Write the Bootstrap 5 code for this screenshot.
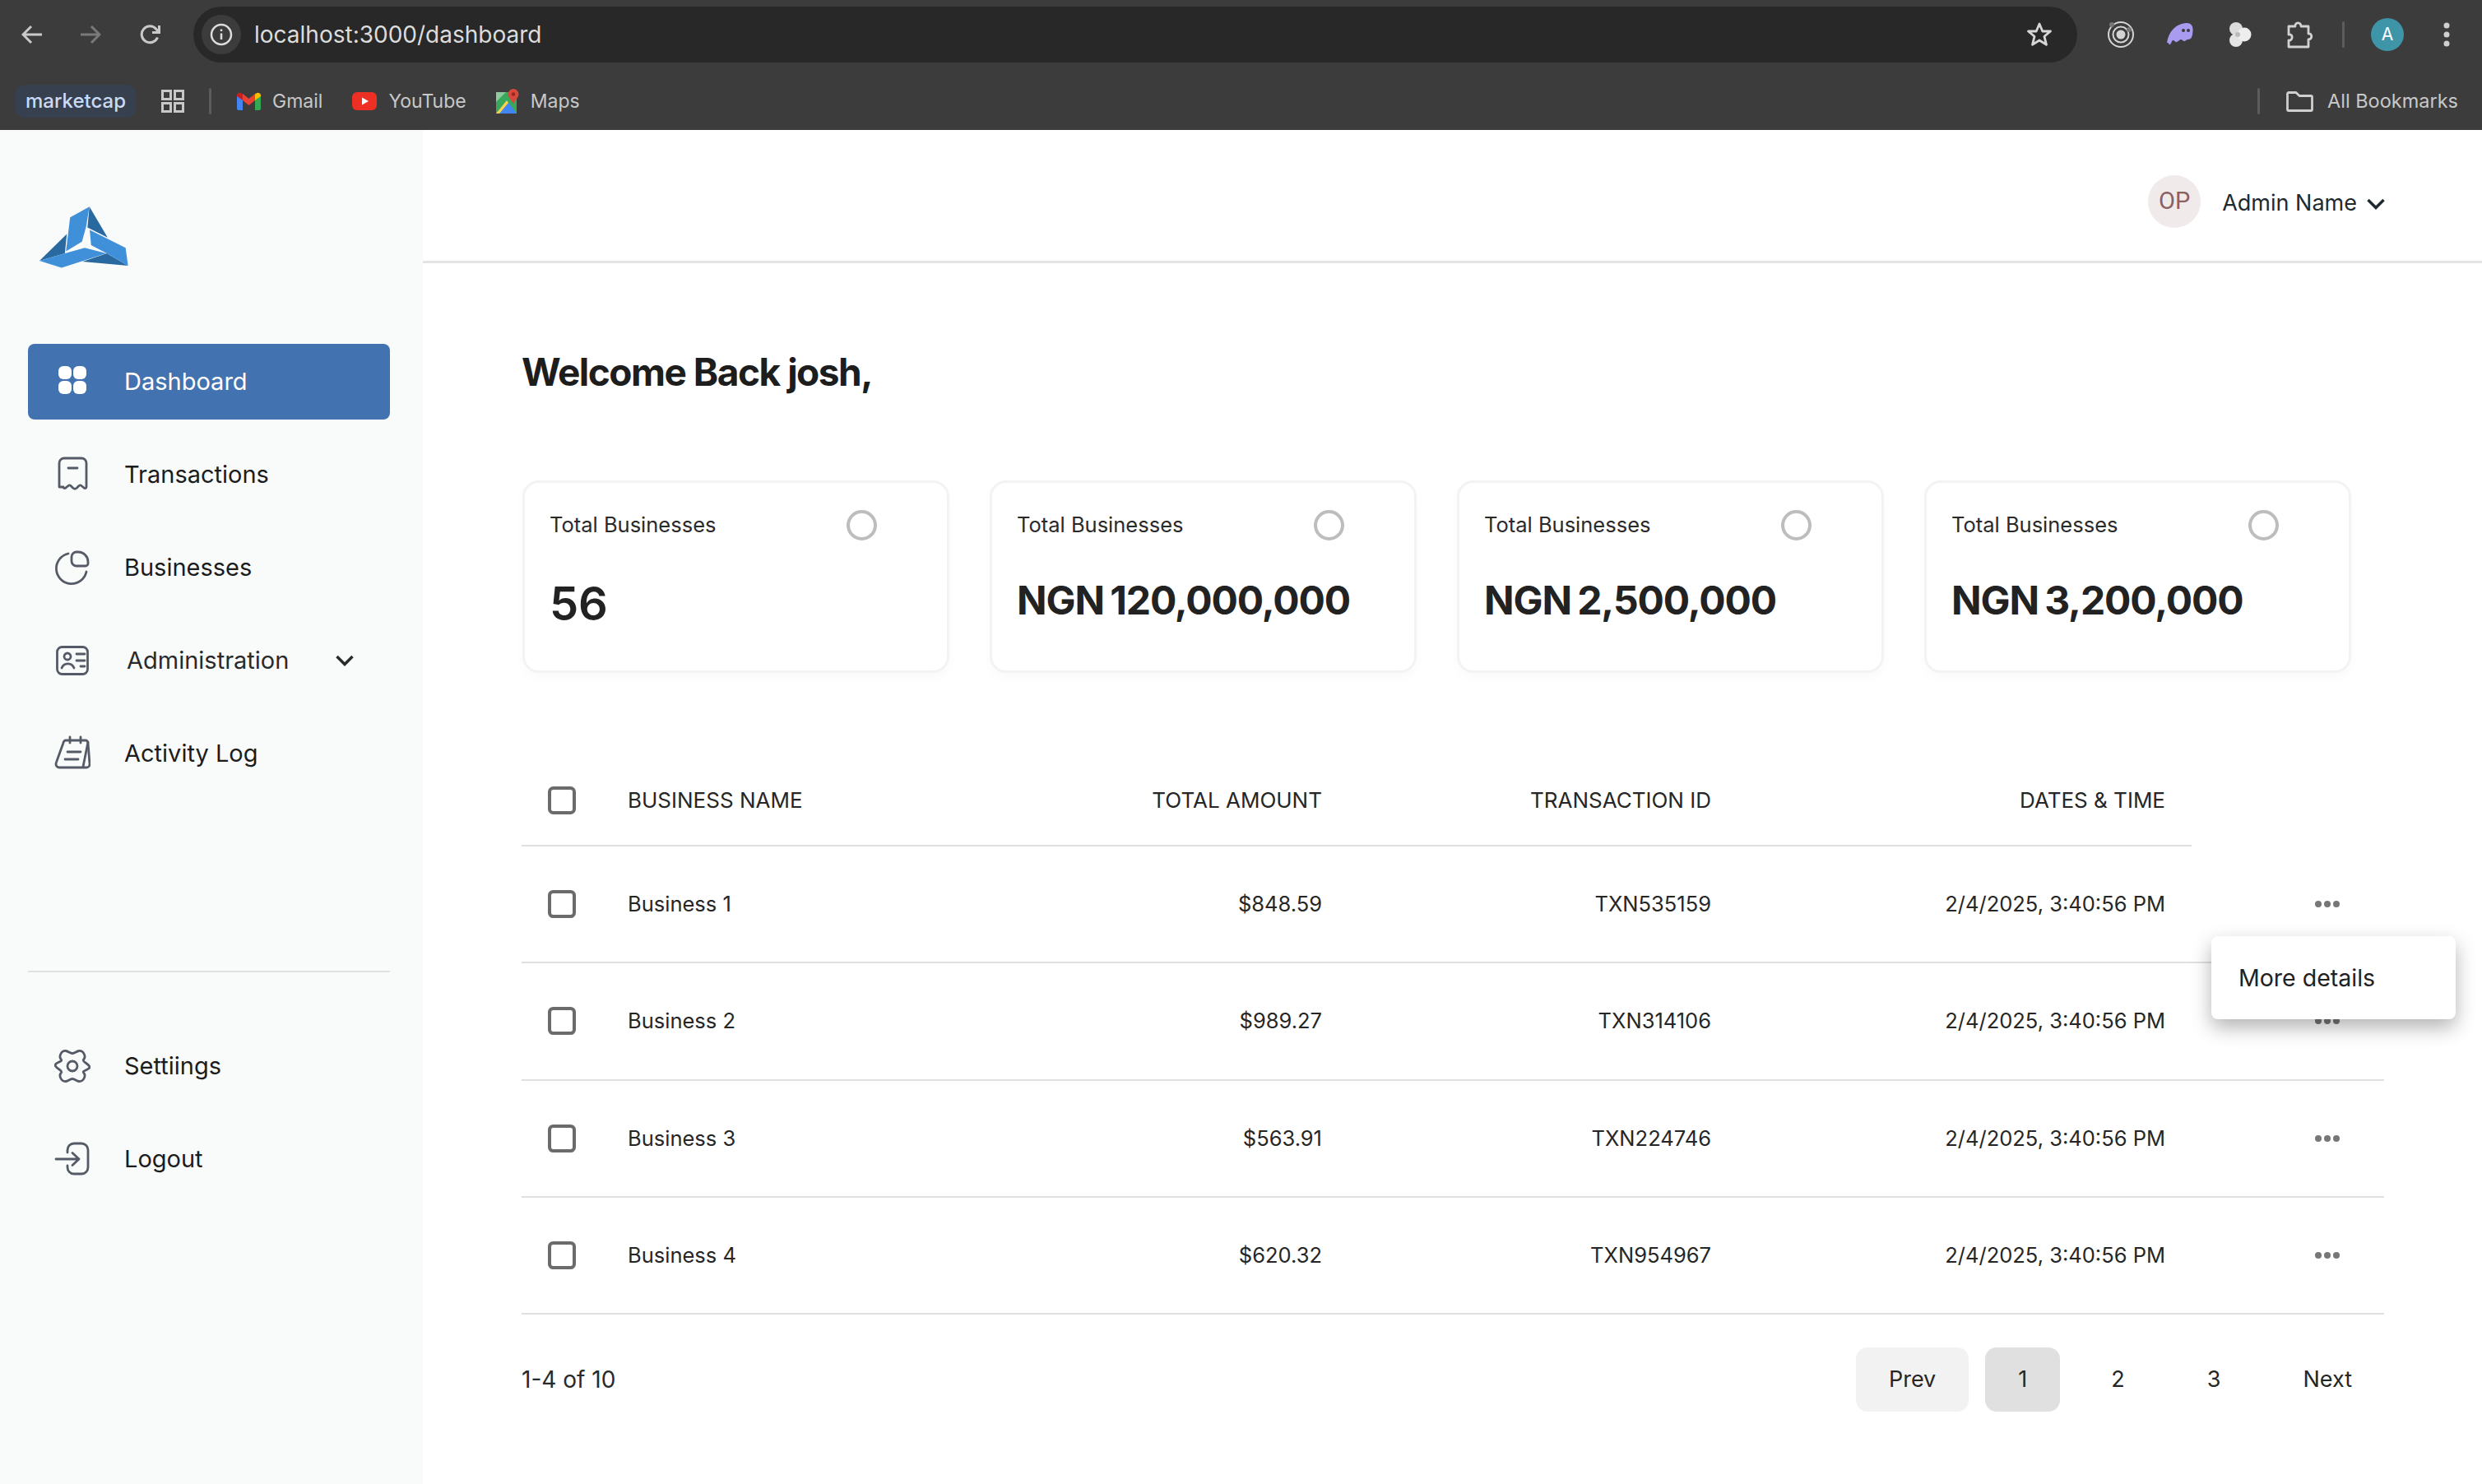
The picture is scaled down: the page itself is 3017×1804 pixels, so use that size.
<!DOCTYPE html>
<html lang="en">
<head>
  <meta charset="UTF-8">
  <meta name="viewport" content="width=device-width, initial-scale=1.0">
  <title>Dashboard</title>
  <link href="https://cdn.jsdelivr.net/npm/bootstrap@5.3.0/dist/css/bootstrap.min.css" rel="stylesheet">
  <style>
    html, body { height: 100%; }
    body { font-family: Inter, "Liberation Sans", sans-serif; color: #222; background: #fff; overflow: hidden; }

    /* browser chrome */
    .chrome-bar { background: #3c3c3c; height: 158px; font-family: Inter, "Liberation Sans", sans-serif; }
    .tab-row { height: 84px; padding-top: 8px; }
    .tool-btn { flex: none; display: block; margin-top: 22px; }
    .tool-back { margin-left: 26px; }
    .tool-forward { margin-left: 45px; }
    .tool-reload { margin-left: 47px; }
    .url-box { flex: 1; height: 68px; background: #282828; border-radius: 34px; color: #dcdcdc; font-size: 28px; padding: 0 26px 0 10px; margin: 0 36px 0 39px; }
    .url-info { width: 48px; height: 48px; border-radius: 50%; background: #3c3c3c; margin-right: 16px; }
    .ext-tools { height: 68px; padding-right: 39px; }
    .ext-ghost { margin-left: 38px; }
    .ext-blobs { margin-left: 40px; }
    .ext-puzzle { margin-left: 42px; }
    .ext-sep { margin: 0 32px 0 34px; }
    .profile-dot { width: 40px; height: 40px; background: #3f95a8; color: #fff; font-size: 21px; }
    .kebab-icon { margin-left: 48px; }
    .chrome-sep { width: 3px; background: #5c5c5c; border-radius: 2px; height: 32px; flex: none; }
    .bookmark-row { height: 74px; padding: 4px 0 0 18px; color: #c8c8c8; font-size: 23px; }
    .chip-bookmark { background: #36404f; color: #c9dbf8; border-radius: 12px; height: 40px; width: 148px; font-weight: 500; font-size: 24px; }
    .apps-icon { margin-left: 30px; }
    .apps-sep { margin: 0 31px 0 30px; }
    .mark-item { gap: 14px; }
    .mark-next { margin-left: 36px; }
    .folder-sep { margin-right: 32px; }
    .all-marks { margin: 0 29px 0 17px; font-size: 23.500px; }

    /* sidebar */
    .app-shell { height: calc(100% - 158px); }
    .side-panel { width: 514px; flex: none; background: #f9fbfb; padding: 0 40px 0 34px; }
    .logo-wrap { height: 260px; padding-top: 93px; padding-left: 14px; }
    .side-link { height: 92px; margin-bottom: 21px; padding-left: 32px; gap: 41px; font-size: 29px; color: #1c1c1c; border-radius: 8px; text-decoration: none; }
    .side-link.is-active { background: #4272b0; color: #fff; }
    .side-link.admin-link { gap: 44px; padding-right: 44px; color: #2a2a2a; }
    .side-link svg { flex: none; }
    .side-rule { border-top: 2px solid #dfe1e1; opacity: 1; margin: 218px 0 0; height: 0; }
    .side-bottom { padding-top: 68px; }

    /* top header */
    .work-area { min-width: 0; }
    .top-head { height: 162px; border-bottom: 3px solid #e4e4e4; padding-right: 118px; padding-top: 20px; }
    .user-badge { width: 64px; height: 64px; background: #f0eaeb; color: #8a6060; font-size: 29px; font-family: Roboto, sans-serif; margin-right: 26px; margin-top: -6px; }
    .user-name { font-size: 27px; color: #1f2a30; margin-right: 12px; }

    .work-body { padding: 0 119px 0 120px; }
    .welcome-title { font-size: 46px; font-weight: 700; letter-spacing: -1.5px; color: #1d1d1d; margin: 104px 0 104px 0; line-height: 56px; }
    .stat-row { gap: 49px; margin-left: 1px; margin-bottom: 100px; }
    .stat-box { width: 519px; height: 234px; border: 3px solid #f3f3f6; border-radius: 20px; box-shadow: 0 6px 14px rgba(30, 30, 60, .025); padding: 32px 30px; }
    .stat-label { font-size: 25.5px; color: #2a2a2a; width: 361px; }
    .stat-ring { width: 37px; height: 37px; border: 4px solid #bdbdbd; border-radius: 50%; margin-top: 1px; }
    .stat-figure { font-size: 48px; font-weight: 700; color: #222; letter-spacing: -1.1px; word-spacing: -3px; margin-top: 43px; line-height: 60px; }
    .stat-figure.is-count { font-size: 56px; font-weight: 600; letter-spacing: -.3px; margin-top: 47px; }

    /* table */
    .biz-table { table-layout: fixed; width: 2264px; margin: 0; --bs-table-border-color: #e0e0e0; font-size: 25.5px; color: #262626; }
    .biz-table th { height: 110px; font-weight: 400; font-size: 26px; vertical-align: middle; padding: 0 32px; border-bottom: 2px solid #e0e0e0; color: #262626; }
    .biz-table td { height: 142.25px; vertical-align: middle; padding: 0 32px; border-bottom: 2px solid #e0e0e0; color: #262626; }
    .biz-table > :not(caption) > * > * { box-shadow: none; }
    .biz-table > tbody { border-top: 0; }
    .col-pick { width: 97px; }
    .col-name { width: 569px; }
    .col-amount { width: 339px; }
    .col-txn { width: 473px; }
    .col-date { width: 552px; }
    .col-action { width: 234px; }
    .row-check { width: 34px; height: 34px; margin: 0 !important; display: block; border: 4px solid #6b6b6b; border-radius: 4px; background-color: #fff; }
    .biz-table td.action-cell { padding: 0; }
    .action-wrap { height: 8px; padding-left: 150px; line-height: 0; }
    .action-menu { top: 43px; left: 24px; width: 297px; height: 101px; padding: 0; border: 0; border-radius: 8px; background: #fff; box-shadow: 0 10px 24px rgba(0, 0, 0, .3); z-index: 5; min-width: 0; }
    .action-menu .dropdown-item { font-size: 28.500px; color: #222; padding: 0 33px; height: 101px; line-height: 101px; }

    /* pager */
    .pager-row { margin-top: 40px; height: 78px; width: 2265px; }
    .count-note { font-size: 28px; color: #2a2a2a; }
    .pager-list { gap: 20px; }
    .pager-list .btn { font-size: 27px; height: 78px; padding: 0 40px; border: 0; border-radius: 14px; color: #262626; line-height: 78px; }
    .pager-list .btn.is-prev { background: #f2f2f2; }
    .pager-list .btn.is-current { background: #e0e0e0; margin-right: 2px; }
  </style>
</head>
<body>
  <!-- Barre du navigateur -->
  <div class="chrome-bar">
    <div class="tab-row d-flex align-items-start">
      <svg class="tool-btn tool-back" width="26" height="24" viewBox="0 0 26 24" fill="none" stroke="#c9c9c9" stroke-width="3"><path d="M25 12H3M12 2 2 12l10 10"/></svg>
      <svg class="tool-btn tool-forward" width="26" height="24" viewBox="0 0 26 24" fill="none" stroke="#797979" stroke-width="3"><path d="M1 12h22M14 2l10 10-10 10"/></svg>
      <svg class="tool-btn tool-reload" width="26" height="24" viewBox="0 0 26 24" fill="none" stroke="#c9c9c9" stroke-width="3"><path d="M21.5 15.5A10 10 0 1 1 20 5.500L23 9"/><path d="M23.500 1v8.500H15"/></svg>
      <div class="url-box d-flex align-items-center">
        <span class="url-info d-flex align-items-center justify-content-center">
          <svg width="28" height="28" viewBox="0 0 28 28" fill="none" stroke="#dcdcdc" stroke-width="2.500"><circle cx="14" cy="14" r="12"/><path d="M14 12.500V20M14 7.500v2.500"/></svg>
        </span>
        <span>localhost:3000/dashboard</span>
        <svg class="ms-auto me-1" width="32" height="32" viewBox="0 0 32 32" fill="none" stroke="#d6d6d6" stroke-width="2.800" stroke-linejoin="round"><path d="M16 3l3.800 9h9.700l-7.500 6.300 2.500 10L16 23l-8.500 5.300 2.500-10L2.500 12h9.700z"/></svg>
      </div>
      <div class="ext-tools d-flex align-items-center">
        <svg width="34" height="34" viewBox="0 0 34 34" fill="none" stroke="#d4d4d4" stroke-width="2"><circle cx="17" cy="17" r="15"/><circle cx="17" cy="17" r="9.500"/><circle cx="17" cy="17" r="4.500" fill="#d4d4d4"/><circle cx="6" cy="5" r="3" fill="#777" stroke="none"/><circle cx="27" cy="11" r="3" fill="#777" stroke="none"/></svg>
        <svg class="ext-ghost" width="34" height="30" viewBox="0 0 34 30"><path d="M1 25C3 11 12 2 24 1c7-.5 9 4 8.500 10-.5 7-2 10-6 10-2 0-2.500 2-4.500 2s-2-2-4-2-3 3-5.500 3-2-2-4-2-2 5-4 5c-1.500 0-2-1-1.500-2z" fill="#a99cf0"/><circle cx="21" cy="10" r="2" fill="#3c3c3c"/><circle cx="27" cy="10" r="2" fill="#3c3c3c"/></svg>
        <svg class="ext-blobs" width="30" height="32" viewBox="0 0 30 32"><circle cx="11" cy="9" r="8" fill="#dcdcdc"/><circle cx="11" cy="23" r="8" fill="#e4e4e4"/><circle cx="21" cy="16" r="8.500" fill="#eeeeee"/><circle cx="13" cy="16" r="3" fill="#bbb"/></svg>
        <svg class="ext-puzzle" width="34" height="34" viewBox="0 0 34 34" fill="none" stroke="#d2d2d2" stroke-width="2.800" stroke-linejoin="round"><path d="M3 7h8c-1-5 7-6 7 0h9v9c5-1 5 7 0 7v9H3v-8c5 1 6-8 0-7z"/></svg>
        <span class="chrome-sep ext-sep"></span>
        <span class="profile-dot d-flex align-items-center justify-content-center rounded-circle">A</span>
        <svg class="kebab-icon" width="8" height="32" viewBox="0 0 8 32" fill="#cfcfcf"><circle cx="4" cy="5" r="3.500"/><circle cx="4" cy="16" r="3.500"/><circle cx="4" cy="27" r="3.500"/></svg>
      </div>
    </div>
    <div class="bookmark-row d-flex align-items-center">
      <span class="chip-bookmark d-flex align-items-center justify-content-center">marketcap</span>
      <svg class="apps-icon" width="28" height="28" viewBox="0 0 28 28" fill="none" stroke="#c8c8c8" stroke-width="3"><rect x="1.500" y="1.500" width="10" height="10"/><rect x="16.500" y="1.500" width="10" height="10"/><rect x="1.500" y="16.500" width="10" height="10"/><rect x="16.500" y="16.500" width="10" height="10"/></svg>
      <span class="chrome-sep apps-sep"></span>
      <span class="mark-item d-flex align-items-center">
        <svg width="29" height="22" viewBox="0 0 29 22"><path d="M0 4v16a2 2 0 0 0 2 2h5V9z" fill="#4285f4"/><path d="M29 4v16a2 2 0 0 1-2 2h-5V9z" fill="#34a853"/><path d="M22 2v8l7-5V4c0-3-4-4-5.500-2.500z" fill="#fbbc04"/><path d="M7 2v8l7.500 6 7.500-6V2l-7.500 6z" fill="#ea4335"/><path d="M0 4v1l7 5V2L5.500 1.500C3.500 0 0 1 0 4z" fill="#c5221f"/></svg>
        <span>Gmail</span>
      </span>
      <span class="mark-item mark-next d-flex align-items-center">
        <svg width="30" height="22" viewBox="0 0 30 22"><rect width="30" height="22" rx="6" fill="#ee3024"/><path d="M12 6.500v9l8-4.500z" fill="#fff"/></svg>
        <span>YouTube</span>
      </span>
      <span class="mark-item mark-next d-flex align-items-center">
        <svg width="28" height="30" viewBox="0 0 28 30"><rect y="4" width="25" height="26" fill="#38a85a"/><path d="M0 30 13 14l12 16z" fill="#4285f4"/><path d="M0 30 13 14l2 3L4 30z" fill="#fbd34a"/><path d="M0 4h12L0 16z" fill="#8fc9a0"/><path d="M21 0a6.500 6.500 0 0 0-6.500 6.500c0 4 4.500 7 6.500 12 2-5 6.500-8 6.500-12A6.500 6.500 0 0 0 21 0z" fill="#d9483b"/><circle cx="21" cy="6.500" r="2.200" fill="#8e2a22"/></svg>
        <span>Maps</span>
      </span>
      <span class="chrome-sep folder-sep ms-auto"></span>
      <svg width="33" height="25" viewBox="0 0 33 25" fill="none" stroke="#cfcfcf" stroke-width="2.800" stroke-linejoin="round"><path d="M1.500 3a1.500 1.500 0 0 1 1.500-1.500h9l4 4h14a1.500 1.500 0 0 1 1.500 1.500v15a1.500 1.500 0 0 1-1.500 1.500H3A1.500 1.500 0 0 1 1.500 22z"/></svg>
      <span class="all-marks">All Bookmarks</span>
    </div>
  </div>

  <div class="app-shell d-flex">
    <!-- Menu latéral -->
    <aside class="side-panel">
      <div class="logo-wrap">
        <svg width="108" height="75" viewBox="146 153 322 222">
          <polygon points="327,153 393,265 320,228" fill="#2a699f"/>
          <polygon points="146,349 245,252 238,322" fill="#2a699f"/>
          <polygon points="390,322 467,367 302,352" fill="#2a699f"/>
          <polygon points="257,192 327,153 315,225 300,280 242,315" fill="#3f90d9"/>
          <polygon points="328,237 458,302 467,367 390,322 333,292" fill="#3f90d9"/>
          <polygon points="146,349 238,322 310,302 388,322 226,374" fill="#3f90d9"/>
        </svg>
      </div>
      <a class="side-link is-active d-flex align-items-center" href="#">
        <svg width="44" height="44" viewBox="0 0 44 44" fill="#fff"><rect x="5" y="3" width="16" height="16" rx="6"/><rect x="23" y="3" width="16" height="16" rx="6"/><rect x="5" y="21" width="16" height="16" rx="6"/><rect x="23" y="21" width="16" height="16" rx="6"/></svg>
        <span>Dashboard</span>
      </a>
      <a class="side-link d-flex align-items-center" href="#">
        <svg width="44" height="44" viewBox="0 0 44 44" fill="none" stroke="#555b66" stroke-width="2.800" stroke-linecap="round" stroke-linejoin="round"><path d="M6 37V8a6 6 0 0 1 6-6h21a6 6 0 0 1 6 6v29c0 1.500-1.500 2-3 1l-3-2.500c-1-.8-2-.8-3 0l-3 3q-2 1.500-4 0l-3-3c-1-.8-2-.8-3 0l-3 2.500c-1.500 1-3 .5-3-1z"/><path d="M17 14h11"/></svg>
        <span>Transactions</span>
      </a>
      <a class="side-link d-flex align-items-center" href="#">
        <svg width="44" height="44" viewBox="0 0 44 44" fill="none" stroke="#555b66" stroke-width="2.800" stroke-linecap="round" stroke-linejoin="round"><path d="M17 5A18.500 18.500 0 1 0 39 27"/><path d="M29 3A12 12 0 0 1 41 15v2a3 3 0 0 1-3 3H27a6 6 0 0 1-6-6V9a6 6 0 0 1 6-6z"/></svg>
        <span>Businesses</span>
      </a>
      <a class="side-link admin-link d-flex align-items-center" href="#">
        <svg width="44" height="44" viewBox="0 0 44 44" fill="none" stroke="#555b66" stroke-width="2.800" stroke-linecap="round" stroke-linejoin="round"><rect x="3.500" y="5.500" width="37" height="33" rx="6"/><circle cx="16" cy="17" r="4"/><path d="M9 31a8 8 0 0 1 15 0M27 14h10M27 22h10M32 29h5"/></svg>
        <span>Administration</span>
        <svg class="ms-auto" width="22" height="14" viewBox="0 0 22 14" fill="none" stroke="#2a2a2a" stroke-width="3.500"><path d="M1.500 2 11 11.500 20.500 2"/></svg>
      </a>
      <a class="side-link d-flex align-items-center" href="#">
        <svg width="44" height="44" viewBox="0 0 44 44" fill="none" stroke="#555b66" stroke-width="2.800" stroke-linecap="round" stroke-linejoin="round"><path d="M11 9a3 3 0 0 1 3-3h24a3 3 0 0 1 3 3l2 26a4 4 0 0 1-4 4H6a4 4 0 0 1-4-4c0-1 .3-2 .7-3L11 9z"/><path d="M41 8l-6 30M19 2v7M32 2v7M16 20h16M13 29h16"/></svg>
        <span>Activity Log</span>
      </a>
      <hr class="side-rule">
      <div class="side-bottom">
        <a class="side-link d-flex align-items-center" href="#">
          <svg width="44" height="44" viewBox="0 0 44 44" fill="none" stroke="#555b66" stroke-width="2.800" stroke-linejoin="round"><path d="M35.420 14.250C39 11 36 3 30 3.500 27 3.800 25 6.500 22 6.500S17 3.800 14 3.500C8 3 5 11 8.580 14.250 10 17 -1 18 1.500 22S10 27 8.580 29.750C5 33 8 41 14 40.500 17 40.200 19 37.500 22 37.500S27 40.200 30 40.500C36 41 39 33 35.420 29.750 34 27 45 26 42.500 22S34 17 35.420 14.250z"/><circle cx="22" cy="22" r="6"/></svg>
          <span>Settiings</span>
        </a>
        <a class="side-link d-flex align-items-center" href="#">
          <svg width="44" height="44" viewBox="0 0 44 44" fill="none" stroke="#555b66" stroke-width="2.800" stroke-linecap="round" stroke-linejoin="round"><path d="M2 22h28M22 14.500l8 7.500-8 7.500M16 14v-3a8 8 0 0 1 8-8h9a8 8 0 0 1 8 8v21a8 8 0 0 1-8 8h-9a8 8 0 0 1-8-8v-2"/></svg>
          <span>Logout</span>
        </a>
      </div>
    </aside>

    <!-- Contenu principal -->
    <main class="work-area flex-grow-1">
      <header class="top-head d-flex align-items-center justify-content-end">
        <span class="user-badge rounded-circle d-flex align-items-center justify-content-center">OP</span>
        <span class="user-name">Admin Name</span>
        <svg width="22" height="14" viewBox="0 0 22 14" fill="none" stroke="#1f2a30" stroke-width="3.500"><path d="M1.500 2 11 11.500 20.500 2"/></svg>
      </header>
      <div class="work-body">
        <h1 class="welcome-title">Welcome Back josh,</h1>
        <div class="stat-row d-flex" id="stat-row"></div>
        <table class="table biz-table">
          <colgroup>
            <col class="col-pick"><col class="col-name"><col class="col-amount"><col class="col-txn"><col class="col-date"><col class="col-action">
          </colgroup>
          <thead>
            <tr>
              <th><input class="form-check-input row-check" type="checkbox" aria-label="Select all"></th>
              <th>BUSINESS NAME</th>
              <th class="text-end">TOTAL AMOUNT</th>
              <th class="text-end">TRANSACTION ID</th>
              <th class="text-end">DATES &amp; TIME</th>
            </tr>
          </thead>
          <tbody id="biz-rows"></tbody>
        </table>
        <div class="pager-row d-flex align-items-center justify-content-between">
          <span class="count-note">1-4 of 10</span>
          <div class="pager-list d-flex">
            <button class="btn is-prev" type="button">Prev</button>
            <button class="btn is-current" type="button">1</button>
            <button class="btn" type="button">2</button>
            <button class="btn" type="button">3</button>
            <button class="btn" type="button">Next</button>
          </div>
        </div>
      </div>
    </main>
  </div>

  <script src="https://cdn.jsdelivr.net/npm/bootstrap@5.3.0/dist/js/bootstrap.bundle.min.js"></script>
  <script>
    const stats = [
      { label: "Total Businesses", value: "56", count: true },
      { label: "Total Businesses", value: "NGN 120,000,000" },
      { label: "Total Businesses", value: "NGN 2,500,000" },
      { label: "Total Businesses", value: "NGN 3,200,000" }
    ];
    const rows = [
      { name: "Business 1", amount: "$848.59", txn: "TXN535159" },
      { name: "Business 2", amount: "$989.27", txn: "TXN314106" },
      { name: "Business 3", amount: "$563.91", txn: "TXN224746" },
      { name: "Business 4", amount: "$620.32", txn: "TXN954967" }
    ];
    const dots = `<svg width="30" height="8" viewBox="0 0 30 8" fill="#777"><circle cx="4" cy="4" r="4"/><circle cx="15" cy="4" r="4"/><circle cx="26" cy="4" r="4"/></svg>`;

    document.getElementById("stat-row").innerHTML = stats.map(s => `
      <div class="card stat-box">
        <div class="d-flex">
          <span class="stat-label">${s.label}</span>
          <span class="stat-ring"></span>
        </div>
        <div class="stat-figure ${s.count ? "is-count" : ""}">${s.value}</div>
      </div>`).join("");

    document.getElementById("biz-rows").innerHTML = rows.map((r, i) => `
      <tr>
        <td><input class="form-check-input row-check" type="checkbox" aria-label="Select ${r.name}"></td>
        <td>${r.name}</td>
        <td class="text-end">${r.amount}</td>
        <td class="text-end">${r.txn}</td>
        <td class="text-end">2/4/2025, 3:40:56 PM</td>
        <td class="action-cell">
          <div class="action-wrap position-relative">
            ${dots}
            ${i === 0 ? `<div class="dropdown-menu show action-menu"><a class="dropdown-item" href="#">More details</a></div>` : ""}
          </div>
        </td>
      </tr>`).join("");
  </script>
</body>
</html>
